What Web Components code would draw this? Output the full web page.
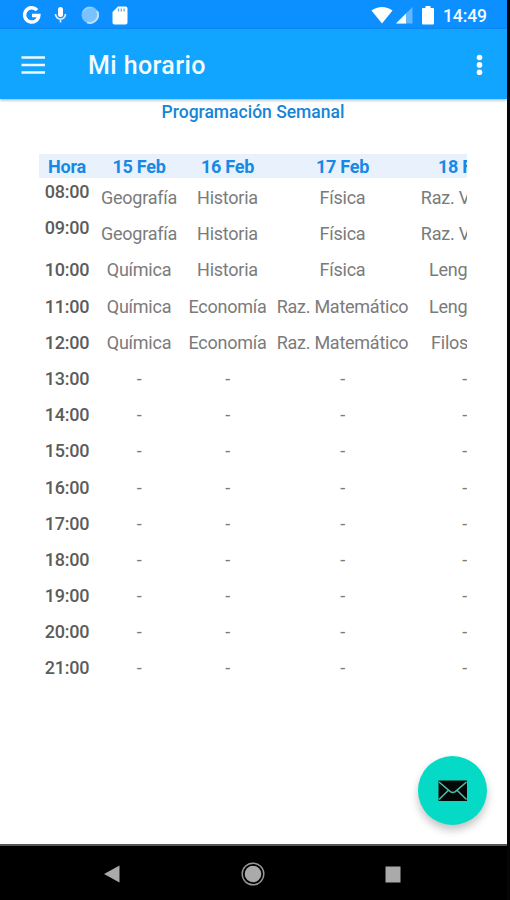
<!DOCTYPE html>
<html lang="es">
<head>
<meta charset="utf-8">
<title>Mi horario</title>
<style>
  html, body {
    height: 100%;
    margin: 0;
    background: #050505;
    font-family: Roboto, "Noto Sans", sans-serif;
  }
</style>
</head>
<body>
<phone-screen>
  <status-bar slot="top" time="14:49"></status-bar>
  <app-bar slot="top">Mi horario</app-bar>
  <week-schedule>Programación Semanal</week-schedule>
  <mail-button slot="floating"></mail-button>
  <nav-bar slot="bottom"></nav-bar>
</phone-screen>

<template id="phone-screen-template">
  <style>
    :host {
      display: flex;
      flex-direction: column;
      position: relative;
      width: 507px;
      height: 900px;
      overflow: hidden;
      background: #fff;
    }

    main {
      flex: 1;
      min-height: 0;
    }

    ::slotted([slot="floating"]) {
      position: absolute;
      right: 20px;
      bottom: 75px;
    }
  </style>
  <slot name="top"></slot>
  <main><slot></slot></main>
  <slot name="floating"></slot>
  <slot name="bottom"></slot>
</template>

<template id="status-bar-template">
  <style>
    :host {
      display: block;
      height: 29px;
      background: #0c8fff;
      color: #f4fbff;
    }

    .bar {
      display: flex;
      align-items: center;
      height: 30px;
      padding: 0 20px 0 22px;
    }

    svg {
      display: block;
      flex: none;
    }

    .mic { margin-left: 13px; }
    .sync { margin-left: 14px; }
    .card { margin-left: 13px; }
    .wifi { margin-left: auto; }
    .signal { margin-left: 3px; }
    .battery { margin-left: 9px; }

    .time {
      width: 44px;
      margin: 2px 0 0 9px;
      font-size: 17.500px;
      font-weight: 500;
      line-height: 20px;
      letter-spacing: -0.1px;
    }
  </style>
  <div class="bar">
    <svg width="19" height="20" viewBox="0 0 19 20">
      <path d="M15 5.2A7.1 7.1 0 1 0 16.8 10.400H10" fill="none" stroke="#fff" stroke-width="3.500"/>
    </svg>
    <svg class="mic" width="13" height="18" viewBox="0 0 13 18">
      <rect x="4" y="1" width="5" height="10" rx="2.500" fill="#fff"/>
      <path d="M1.500 8a5 5 0 0 0 10 0M6.500 13v3.500" fill="none" stroke="#d8eeff" stroke-width="1.700"/>
    </svg>
    <svg class="sync" width="18" height="18" viewBox="0 0 18 18">
      <circle cx="9" cy="9" r="8.500" fill="#78c2ff"/>
      <path d="M16 5A8 8 0 0 1 6 16.300" fill="none" stroke="#b7e2ff" stroke-width="2"/>
      <path d="M2 6a8 8 0 0 1 9-4" fill="none" stroke="#98d2ff" stroke-width="1.500"/>
    </svg>
    <svg class="card" width="16" height="19" viewBox="0 0 16 19">
      <path d="M6 .5h7.500a2 2 0 0 1 2 2v14a2 2 0 0 1-2 2h-11a2 2 0 0 1-2-2V6z" fill="#fff"/>
      <path d="M6.500 2.500v3M9.300 2.500v3M12.100 2.500v3" stroke="#5aaeed" stroke-width="1.300"/>
    </svg>
    <svg class="wifi" width="22" height="18" viewBox="0 0 22 18">
      <path d="M.5 4.500C6.500-.3 15.500-.3 21.500 4.500L11 17.500z" fill="#fff"/>
    </svg>
    <svg class="signal" width="17" height="17" viewBox="0 0 17 17">
      <path d="M0 16.500 16.500 0v16.500z" fill="#62b7ff"/>
      <path d="M0 16.500 10 6.500v10z" fill="#fff"/>
    </svg>
    <svg class="battery" width="12" height="19" viewBox="0 0 12 19">
      <path d="M3.500 0h5v2H11a1 1 0 0 1 1 1v14.500a1 1 0 0 1-1 1H1a1 1 0 0 1-1-1V3a1 1 0 0 1 1-1h2.500z" fill="#fff"/>
    </svg>
    <div class="time"></div>
  </div>
</template>

<template id="app-bar-template">
  <style>
    :host {
      display: flex;
      align-items: center;
      position: relative;
      box-sizing: border-box;
      height: 70px;
      padding: 0 22px 0 21px;
      background: #12a5ff;
      box-shadow: 0 1px 3px rgba(0, 40, 80, 0.4);
      color: #f4fbff;
    }

    h1 {
      flex: 1;
      margin: 3px 0 0 43px;
      font-size: 25px;
      font-weight: 500;
      line-height: 30px;
      letter-spacing: 0.4px;
    }

    svg { display: block; }
  </style>
  <svg width="24" height="20" viewBox="0 0 24 20">
    <path d="M.5 3.500h24M.5 11h24M.5 18.500h24" stroke="#eefaff" stroke-width="2.400"/>
  </svg>
  <h1><slot></slot></h1>
  <svg width="10" height="22" viewBox="0 0 10 22">
    <g fill="#fff">
      <circle cx="4.500" cy="4.500" r="2.800"/>
      <circle cx="4.500" cy="11.900" r="2.800"/>
      <circle cx="4.500" cy="19.200" r="2.800"/>
    </g>
  </svg>
</template>

<template id="week-schedule-template">
  <style>
    :host {
      display: block;
      padding: 3px 40px 0 39px;
    }

    h2 {
      margin: 0 0 31px;
      color: #1685d8;
      font-size: 17.5px;
      font-weight: 500;
      line-height: 21px;
      text-align: center;
    }

    .scroller { overflow: hidden; }

    .row {
      display: grid;
      grid-template-columns: 56px 88px 89px 141px 103px;
      width: 477px;
      height: 36.2px;
      line-height: 37px;
      color: #7b7b7b;
      font-size: 18px;
      letter-spacing: -0.25px;
      text-align: center;
      white-space: nowrap;
    }

    .head {
      height: 24px;
      margin-bottom: 1px;
      background: #e9f1fd;
      color: #1689e6;
      font-weight: 700;
      line-height: 26px;
    }

    .hour {
      color: #5c5c5c;
      font-weight: 500;
    }

    .raised { line-height: 25px; }
  </style>
  <h2><slot></slot></h2>
  <div class="scroller"></div>
</template>

<template id="mail-button-template">
  <style>
    :host {
      display: flex;
      align-items: center;
      justify-content: center;
      width: 69px;
      height: 69px;
      border-radius: 50%;
      background: #04dac5;
      box-shadow: 0 5px 8px rgba(0, 0, 0, 0.24);
    }
  </style>
  <svg width="30" height="22" viewBox="0 0 30 22">
    <rect x=".5" y=".5" width="28.500" height="20.500" fill="#050807"/>
    <path d="M1 2 12.300 11.600q2.500 1.900 5 0L28.500 2M1 19.500 10.500 10.300M28.500 19.500 19 10.300" fill="none" stroke="#4bbda9" stroke-width="1.600"/>
  </svg>
</template>

<template id="nav-bar-template">
  <style>
    :host {
      display: grid;
      grid-template-columns: repeat(3, 140.5px);
      justify-content: center;
      align-items: center;
      justify-items: center;
      box-sizing: border-box;
      height: 56px;
      padding: 2px 2px 0 0;
      border-top: 2px solid #555;
      background: #000;
    }

    svg { display: block; }
  </style>
  <svg width="16" height="18" viewBox="0 0 16 18"><path d="M0 9 15.500.500v17z" fill="#aaa"/></svg>
  <svg width="24" height="24" viewBox="0 0 24 24">
    <circle cx="12" cy="12" r="10.800" fill="none" stroke="#999" stroke-width="1.400"/>
    <circle cx="12" cy="12" r="8.300" fill="#aaa"/>
  </svg>
  <svg width="16" height="17" viewBox="0 0 16 17"><rect x=".5" y=".5" width="15" height="16" fill="#aaa"/></svg>
</template>

<script>
  (function () {
    const days = ["Hora", "15 Feb", "16 Feb", "17 Feb", "18 Feb"];
    const lessons = [
      ["08:00", "Geografía", "Historia", "Física", "Raz. Verbal"],
      ["09:00", "Geografía", "Historia", "Física", "Raz. Verbal"],
      ["10:00", "Química", "Historia", "Física", "Lenguaje"],
      ["11:00", "Química", "Economía", "Raz. Matemático", "Lenguaje"],
      ["12:00", "Química", "Economía", "Raz. Matemático", "Filosofía"],
    ];
    // the rest of the day is free
    for (let hour = 13; hour <= 21; hour++) {
      lessons.push([hour + ":00", "-", "-", "-", "-"]);
    }

    class TemplateElement extends HTMLElement {
      connectedCallback() {
        const template = document.querySelector(`#${this.localName}-template`);
        this.attachShadow({ mode: "open" });
        this.shadowRoot.appendChild(template.content.cloneNode(true));
        this.render();
      }

      render() {}
    }

    customElements.define("phone-screen", class extends TemplateElement {});
    customElements.define("app-bar", class extends TemplateElement {});
    customElements.define("mail-button", class extends TemplateElement {});
    customElements.define("nav-bar", class extends TemplateElement {});

    customElements.define(
      "status-bar",
      class extends TemplateElement {
        render() {
          this.shadowRoot.querySelector(".time").textContent =
            this.getAttribute("time");
        }
      }
    );

    customElements.define(
      "week-schedule",
      class extends TemplateElement {
        render() {
          this.addRow(days, "row head");
          lessons.forEach((lesson, i) => this.addRow(lesson, "row", i < 2));
        }

        addRow(texts, className, raised) {
          const row = document.createElement("div");
          row.className = className;
          texts.forEach((text, i) => {
            const cell = document.createElement("div");
            cell.textContent = text;
            if (i === 0 && className === "row") {
              cell.className = raised ? "hour raised" : "hour";
            }
            row.appendChild(cell);
          });
          this.shadowRoot.querySelector(".scroller").appendChild(row);
        }
      }
    );
  })();
</script>
</body>
</html>
